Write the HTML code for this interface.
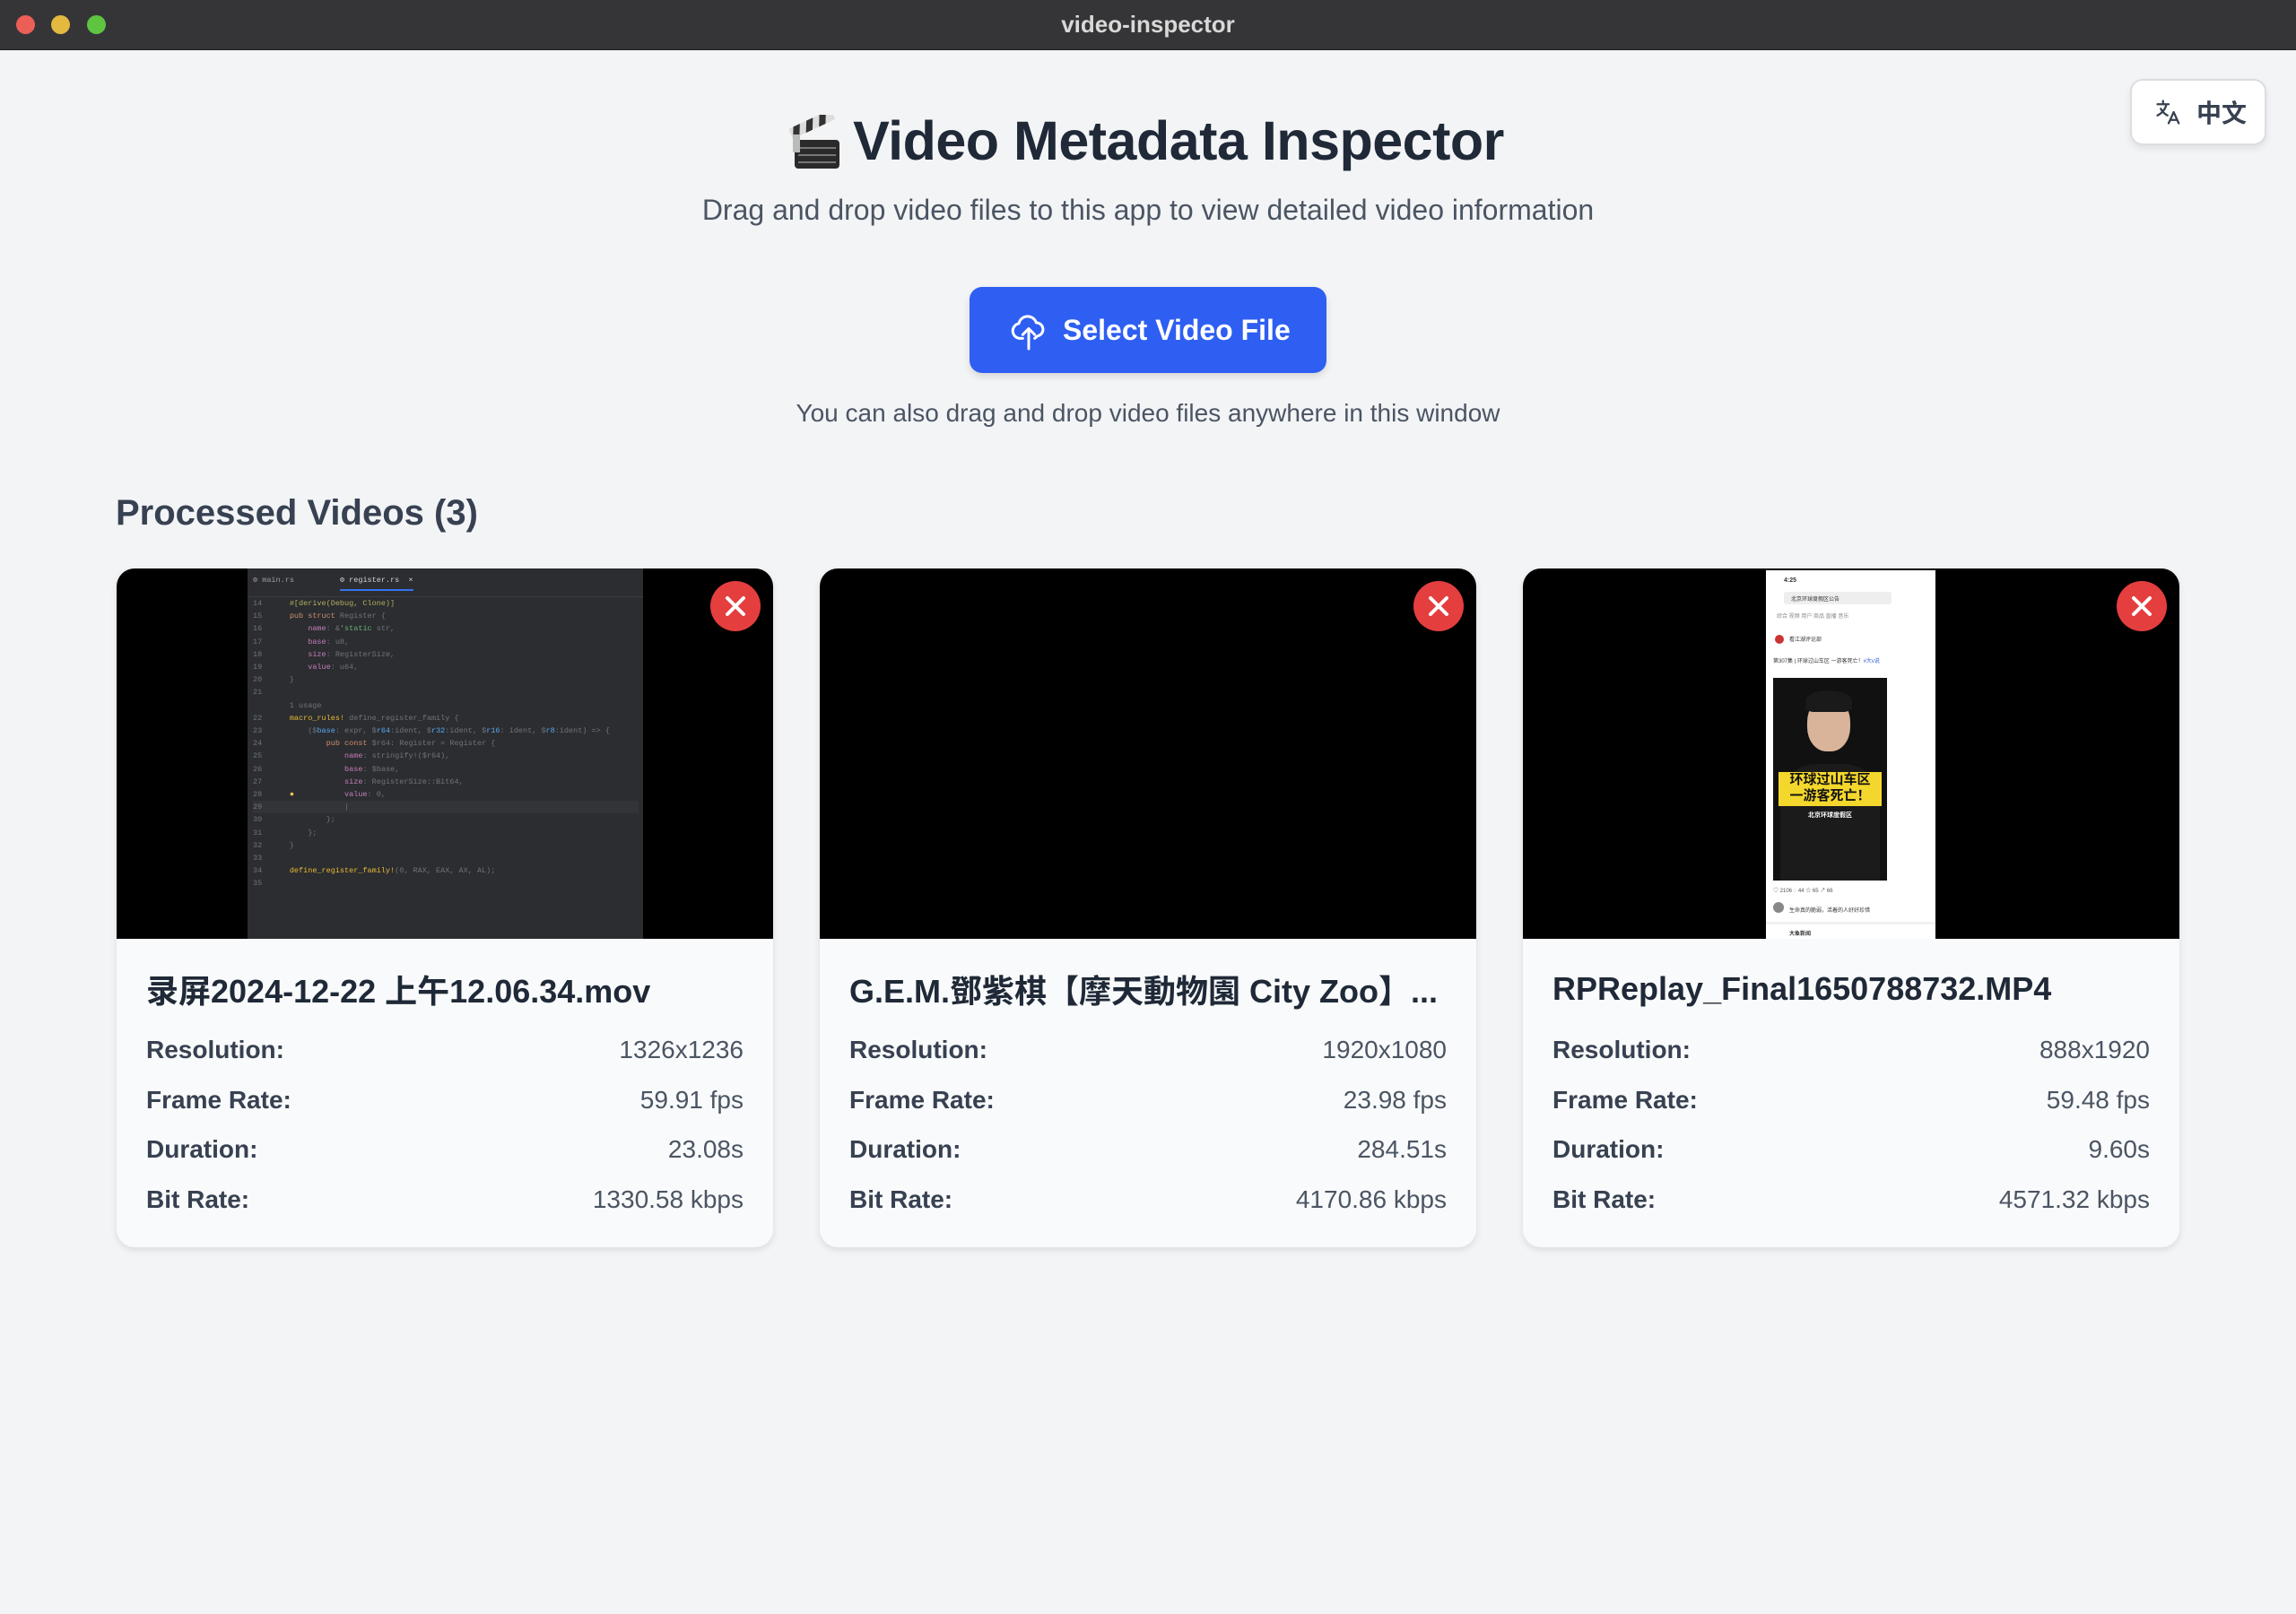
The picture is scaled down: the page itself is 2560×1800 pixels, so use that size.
<!DOCTYPE html>
<html><head><meta charset="utf-8"><style>
*{box-sizing:border-box;margin:0;padding:0}
body{width:2560px;height:1800px;background:#f3f4f6;font-family:"Liberation Sans","Noto Sans CJK SC",sans-serif;position:relative;overflow:hidden}
.tb{position:absolute;left:0;top:0;width:2560px;height:56px;background:#353538;border-bottom:1px solid #1e1e20}
.tb .t{position:absolute;left:0;right:0;top:12px;text-align:center;color:#d8d8d8;font-weight:bold;font-size:26px}
.dot{position:absolute;top:17px;width:21px;height:21px;border-radius:50%}
.abs{position:absolute}
h1{position:absolute;left:0;right:0;top:122px;text-align:center;font-size:61px;font-weight:bold;color:#1f2937;letter-spacing:-0.5px}
.sub{position:absolute;left:0;right:0;top:216px;text-align:center;font-size:32px;color:#4b5563}
.btn{position:absolute;left:1081px;top:320px;width:398px;height:96px;background:#2e5ff2;border-radius:14px;box-shadow:0 4px 8px rgba(0,0,0,.12);color:#fff;font-size:32px;font-weight:bold}
.hint{position:absolute;left:0;right:0;top:445px;text-align:center;font-size:28px;color:#4b5563}
.lang{position:absolute;left:2375px;top:88px;width:152px;height:74px;background:#fff;border:2px solid #dcdde2;border-radius:14px;box-shadow:0 4px 8px rgba(0,0,0,.08)}
.pv{position:absolute;left:129px;top:550px;font-size:40px;font-weight:bold;color:#374151}
.card{position:absolute;top:634px;width:732px;height:757px;border-radius:20px;background:#f9fafb;box-shadow:0 3px 8px rgba(0,0,0,.1);overflow:hidden}
.img{position:absolute;left:0;top:0;width:732px;height:413px;background:#000;overflow:hidden}
.x{position:absolute;right:14px;top:14px;width:56px;height:56px;border-radius:50%;background:#e53e3e}
.nm{position:absolute;left:33px;top:448px;font-size:36px;font-weight:bold;color:#1f2937;white-space:nowrap}
.nm.cj{top:443px}
.row{position:absolute;left:33px;right:33px;font-size:28px;display:flex;justify-content:space-between}
.row b{color:#374151;font-weight:bold}
.row span{color:#4b5563}
.code{position:absolute;left:146px;top:0;width:441px;height:413px;background:#2b2d30;font-family:"Liberation Mono",monospace;font-size:8.5px;color:#bcbec4;white-space:pre;line-height:14.2px}
</style></head><body>
<div class="tb"><div class="dot" style="left:18px;background:#ec5f57"></div><div class="dot" style="left:57px;background:#e3b940"></div><div class="dot" style="left:97px;background:#5fc440"></div><div class="t">video-inspector</div></div>

<svg class="abs" style="left:880px;top:128px" width="62" height="62" viewBox="0 0 62 62">
<rect x="6" y="28" width="50" height="32" rx="4" fill="#2a2a2a"/>
<rect x="10" y="36" width="42" height="2" fill="#777"/><rect x="10" y="44" width="42" height="2" fill="#777"/><rect x="10" y="52" width="42" height="2" fill="#777"/>
<g transform="rotate(-25 6 26)"><rect x="4" y="14" width="52" height="12" fill="#ddd"/><path d="M10 14l8 0 -6 12 -8 0zM26 14l8 0 -6 12 -8 0zM42 14l8 0 -6 12 -8 0z" fill="#333"/></g>
<rect x="4" y="22" width="8" height="20" fill="#bbb"/>
</svg>
<h1><span style="padding-left:68px">Video Metadata Inspector</span></h1>
<div class="sub">Drag and drop video files to this app to view detailed video information</div>
<div class="btn">
<svg class="abs" style="left:46px;top:27px" width="40" height="44" viewBox="0 0 24 26" fill="none" stroke="#fff" stroke-width="1.8" stroke-linecap="round" stroke-linejoin="round"><path d="M8 18H6a5 5 0 0 1-.6-9.9A6 6 0 0 1 17 7.5a4.5 4.5 0 0 1 1 8.9L16 18"/><path d="M12 25V12M8 15.5l4-4 4 4"/></svg>
<div class="abs" style="left:104px;top:30px">Select Video File</div></div>
<div class="hint">You can also drag and drop video files anywhere in this window</div>
<div class="lang">
<svg class="abs" style="left:26px;top:20px" width="30" height="30" viewBox="0 0 24 24" fill="none" stroke="#374151" stroke-width="1.8" stroke-linecap="round" stroke-linejoin="round"><path d="M2 5h10M7 2v3M10 5c-1 5-4 8-8 10M5 9c1.5 3 4 5 6 6"/><path d="M12 22l4.5-10 4.5 10M13.5 19h6"/></svg>
<div class="abs" style="left:72px;top:15px;font-size:28px;font-weight:bold;color:#374151">中文</div></div>
<div class="pv">Processed Videos (3)</div>

<div class="card" style="left:130px">
<div class="img"><div class="code"><div style="height:32px;border-bottom:1px solid #3c3f41;color:#9a9da3;padding:6px 0 0 6px">⚙ main.rs          <span style="color:#ced0d6;border-bottom:2px solid #3574f0;padding-bottom:5px">⚙ register.rs  ×</span></div><div style="padding-left:6px;color:#6f737a">14      <span style="color:#b3ae60">#[derive(Debug, Clone)]</span>
15      <span style="color:#cf8e6d">pub struct</span> Register {
16          <span style="color:#c77dbb">name</span>: &amp;<span style="color:#6aab73">'static</span> str,
17          <span style="color:#c77dbb">base</span>: u8,
18          <span style="color:#c77dbb">size</span>: RegisterSize,
19          <span style="color:#c77dbb">value</span>: u64,
20      }
21
        1 usage
22      <span style="color:#e8ba36">macro_rules!</span> define_register_family {
23          ($<span style="color:#56a8f5">base</span>: expr, $<span style="color:#56a8f5">r64</span>:ident, $<span style="color:#56a8f5">r32</span>:ident, $<span style="color:#56a8f5">r16</span>: ident, $<span style="color:#56a8f5">r8</span>:ident) =&gt; {
24              <span style="color:#cf8e6d">pub const</span> $r64: Register = Register {
25                  <span style="color:#c77dbb">name</span>: stringify!($r64),
26                  <span style="color:#c77dbb">base</span>: $base,
27                  <span style="color:#c77dbb">size</span>: RegisterSize::Bit64,
28      <span style="color:#f2c55c">●</span>           <span style="color:#c77dbb">value</span>: 0,
<span style="background:#323438;display:inline-block;width:430px">29                  |</span>
30              };
31          };
32      }
33
34      <span style="color:#e8ba36">define_register_family!</span>(0, RAX, EAX, AX, AL);
35</div></div></div>
<div class="x"><svg width="56" height="56" viewBox="0 0 56 56"><path d="M19 19l18 18M37 19L19 37" stroke="#fff" stroke-width="4" stroke-linecap="round"/></svg></div>
<div class="nm cj">录屏2024-12-22 上午12.06.34.mov</div>
<div class="row" style="top:521px"><b>Resolution:</b><span>1326x1236</span></div>
<div class="row" style="top:577px"><b>Frame Rate:</b><span>59.91 fps</span></div>
<div class="row" style="top:632px"><b>Duration:</b><span>23.08s</span></div>
<div class="row" style="top:688px"><b>Bit Rate:</b><span>1330.58 kbps</span></div>
</div>

<div class="card" style="left:914px">
<div class="img"></div>
<div class="x"><svg width="56" height="56" viewBox="0 0 56 56"><path d="M19 19l18 18M37 19L19 37" stroke="#fff" stroke-width="4" stroke-linecap="round"/></svg></div>
<div class="nm cj">G.E.M.鄧紫棋【摩天動物園 City Zoo】...</div>
<div class="row" style="top:521px"><b>Resolution:</b><span>1920x1080</span></div>
<div class="row" style="top:577px"><b>Frame Rate:</b><span>23.98 fps</span></div>
<div class="row" style="top:632px"><b>Duration:</b><span>284.51s</span></div>
<div class="row" style="top:688px"><b>Bit Rate:</b><span>4170.86 kbps</span></div>
</div>

<div class="card" style="left:1698px">
<div class="img"><div class="abs" style="left:271px;top:2px;width:189px;height:411px;background:#fff;font-size:7px;color:#333">
<div class="abs" style="left:20px;top:8px;font-weight:bold">4:25</div>
<div class="abs" style="left:20px;top:24px;width:120px;height:14px;background:#eee;border-radius:3px;padding:3px 8px;font-size:6px">北京环球度假区公告</div>
<div class="abs" style="left:12px;top:46px;font-size:6px;color:#888">综合  视频  用户  商品  直播  音乐</div>
<div class="abs" style="left:10px;top:72px;width:10px;height:10px;border-radius:50%;background:#c33"></div>
<div class="abs" style="left:26px;top:72px;font-size:6px">看江湖评论部</div>
<div class="abs" style="left:8px;top:96px;font-size:6px">第307集 | 环球过山车区 一游客死亡！<span style="color:#2a5bd7">#大v说</span></div>
<div class="abs" style="left:8px;top:120px;width:127px;height:226px;background:#111;overflow:hidden">
<div class="abs" style="left:38px;top:22px;width:48px;height:60px;border-radius:45%;background:#d9b49a"></div>
<div class="abs" style="left:36px;top:14px;width:52px;height:24px;border-radius:50% 50% 20% 20%;background:#1a1a1a"></div>
<div class="abs" style="left:8px;top:96px;width:111px;height:130px;border-radius:40px 40px 0 0;background:#1b1b1b"></div>
<div class="abs" style="left:6px;top:105px;width:115px;height:38px;background:#f4d72c;color:#111;font-weight:bold;font-size:15px;line-height:18px;text-align:center">环球过山车区<br>一游客死亡！</div>
<div class="abs" style="left:0;right:0;top:148px;text-align:center;color:#fff;font-size:7px;font-weight:bold">北京环球度假区</div>
</div>
<div class="abs" style="left:8px;top:352px;font-size:6px;color:#555">♡ 2106    ◌ 44    ☆ 65    ↗ 66</div>
<div class="abs" style="left:8px;top:370px;width:12px;height:12px;border-radius:50%;background:#888"></div>
<div class="abs" style="left:26px;top:374px;font-size:6px">生命真的脆弱，活着的人好好珍惜</div>
<div class="abs" style="left:0;top:392px;width:189px;height:3px;background:#f2f2f2"></div>
<div class="abs" style="left:26px;top:400px;font-size:6px;font-weight:bold">大象新闻</div>
</div></div>
<div class="x"><svg width="56" height="56" viewBox="0 0 56 56"><path d="M19 19l18 18M37 19L19 37" stroke="#fff" stroke-width="4" stroke-linecap="round"/></svg></div>
<div class="nm">RPReplay_Final1650788732.MP4</div>
<div class="row" style="top:521px"><b>Resolution:</b><span>888x1920</span></div>
<div class="row" style="top:577px"><b>Frame Rate:</b><span>59.48 fps</span></div>
<div class="row" style="top:632px"><b>Duration:</b><span>9.60s</span></div>
<div class="row" style="top:688px"><b>Bit Rate:</b><span>4571.32 kbps</span></div>
</div>
</body></html>
